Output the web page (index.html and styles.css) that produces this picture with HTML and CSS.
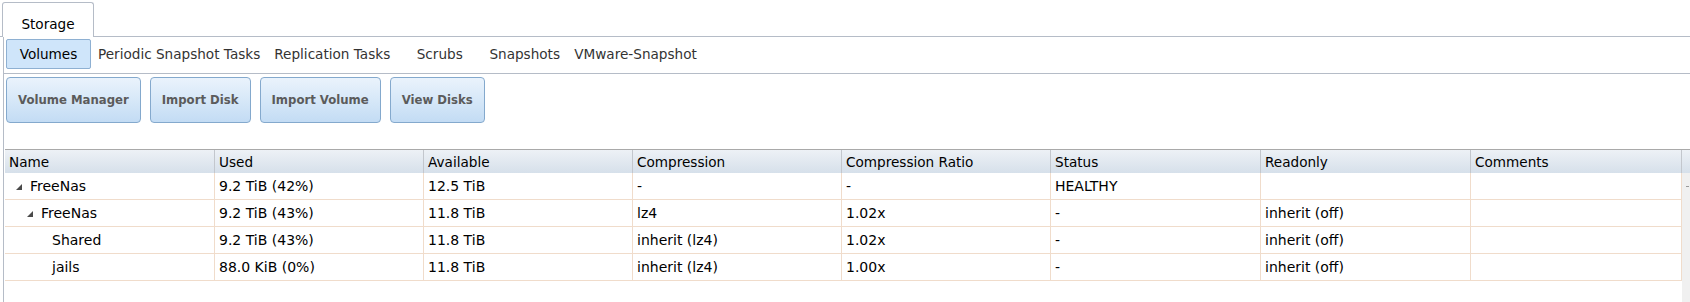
FILE: index.html
```html
<!DOCTYPE html>
<html lang="en">
<head>
    <meta charset="UTF-8">
    <title>Storage</title>
    <link rel="stylesheet" href="styles.css">
</head>
<body>
    <div class="tab-bar">
        <div class="tab active">Storage</div>
    </div>

    <div class="panel">
        <div class="sub-tabs">
            <div class="sub-tab selected">Volumes</div>
            <div class="sub-tab">Periodic Snapshot Tasks</div>
            <div class="sub-tab">Replication Tasks</div>
            <div class="sub-tab">Scrubs</div>
            <div class="sub-tab">Snapshots</div>
            <div class="sub-tab">VMware-Snapshot</div>
        </div>

        <div class="toolbar">
            <button class="action">Volume Manager</button>
            <button class="action">Import Disk</button>
            <button class="action">Import Volume</button>
            <button class="action">View Disks</button>
        </div>

        <div class="grid">
            <div class="grid-head">
                <div class="hcell">Name</div>
                <div class="hcell">Used</div>
                <div class="hcell">Available</div>
                <div class="hcell">Compression</div>
                <div class="hcell">Compression Ratio</div>
                <div class="hcell">Status</div>
                <div class="hcell">Readonly</div>
                <div class="hcell">Comments</div>
                <div class="hfill"></div>
            </div>
            <div class="grid-body">
                <div class="rows">
                    <div class="row">
                        <div class="cell"><span class="expander"><span class="tri"></span></span>FreeNas</div>
                        <div class="cell">9.2 TiB (42%)</div>
                        <div class="cell">12.5 TiB</div>
                        <div class="cell">-</div>
                        <div class="cell">-</div>
                        <div class="cell">HEALTHY</div>
                        <div class="cell"></div>
                        <div class="cell"></div>
                    </div>
                    <div class="row">
                        <div class="cell"><span class="indent"></span><span class="expander"><span class="tri"></span></span>FreeNas</div>
                        <div class="cell">9.2 TiB (43%)</div>
                        <div class="cell">11.8 TiB</div>
                        <div class="cell">lz4</div>
                        <div class="cell">1.02x</div>
                        <div class="cell">-</div>
                        <div class="cell">inherit (off)</div>
                        <div class="cell"></div>
                    </div>
                    <div class="row">
                        <div class="cell"><span class="indent"></span><span class="indent"></span><span class="expander"></span>Shared</div>
                        <div class="cell">9.2 TiB (43%)</div>
                        <div class="cell">11.8 TiB</div>
                        <div class="cell">inherit (lz4)</div>
                        <div class="cell">1.02x</div>
                        <div class="cell">-</div>
                        <div class="cell">inherit (off)</div>
                        <div class="cell"></div>
                    </div>
                    <div class="row">
                        <div class="cell"><span class="indent"></span><span class="indent"></span><span class="expander"></span>jails</div>
                        <div class="cell">88.0 KiB (0%)</div>
                        <div class="cell">11.8 TiB</div>
                        <div class="cell">inherit (lz4)</div>
                        <div class="cell">1.00x</div>
                        <div class="cell">-</div>
                        <div class="cell">inherit (off)</div>
                        <div class="cell"></div>
                    </div>
                </div>
                <div class="scroller"><span class="scroll-mark"></span></div>
            </div>
        </div>
    </div>
</body>
</html>
```

FILE: styles.css
```css
body {
    margin: 0;
    height: 302px;
    overflow: hidden;
    display: flex;
    flex-direction: column;
    font-family: "DejaVu Sans", Verdana, sans-serif;
    font-size: 13.6px;
    color: #000;
    background: #fff;
}

.tab-bar {
    display: flex;
    align-items: flex-end;
    height: 36px;
    padding-left: 2px;
    border-bottom: 1px solid #b5bcc7;
    box-sizing: content-box;
}

.tab {
    width: 92px;
    height: 35px;
    margin-bottom: -1px;
    padding-top: 13px;
    line-height: 17px;
    box-sizing: border-box;
    text-align: center;
    background: #fff;
    border: 1px solid #b5bcc7;
    border-bottom: none;
    border-radius: 3px 3px 0 0;
}

.panel {
    flex: 1;
    display: flex;
    flex-direction: column;
    margin-left: 3px;
    border-left: 1px solid #b5bcc7;
}

.sub-tabs {
    display: flex;
    height: 37px;
    padding: 2px 0 0 2px;
    box-sizing: border-box;
    border-bottom: 1px solid #b5bcc7;
}

.sub-tab {
    min-width: 85px;
    height: 30px;
    padding: 0 6px;
    line-height: 28px;
    box-sizing: border-box;
    text-align: center;
    color: #333;
    border: 1px solid transparent;
    border-radius: 2px;
}

.sub-tab.selected {
    background: #cfe5fa;
    border-color: #8eb0d2;
    color: #000;
}

.toolbar {
    display: flex;
    gap: 9px;
    padding: 3px 0 26px 2px;
}

.action {
    height: 46px;
    padding: 0 11px;
    font-family: "DejaVu Sans", Verdana, sans-serif;
    font-size: 11.7px;
    font-weight: bold;
    color: #5b5b5b;
    background: linear-gradient(#eaf3fc, #c3dcf4);
    border: 1px solid #84a9cd;
    border-radius: 4px;
}

.grid {
    flex: 1;
    display: flex;
    flex-direction: column;
    margin-left: 1px;
    border-top: 1px solid #a9a9a9;
}

.grid-head {
    display: grid;
    grid-template-columns: 210px 209px 209px 209px 209px 210px 210px 211px 1fr;
    height: 23px;
    background: linear-gradient(#edf1f6, #d6e0ea);
}

.hcell {
    padding: 1px 0 0 4px;
    line-height: 22px;
    border-right: 1px solid #c3c7cd;
    white-space: nowrap;
    overflow: hidden;
}

.grid-body {
    flex: 1;
    display: flex;
}

.rows {
    width: 1677px;
}

.row {
    display: grid;
    grid-template-columns: 210px 209px 209px 209px 209px 210px 210px 211px;
    height: 27px;
    border-bottom: 1px solid #f0dccb;
    box-sizing: border-box;
    font-size: 14px;
}

.cell {
    display: flex;
    align-items: center;
    padding-left: 4px;
    border-right: 1px solid #f0dccb;
    white-space: nowrap;
    overflow: hidden;
}

.indent {
    width: 11px;
    flex: none;
}

.expander {
    display: flex;
    width: 21px;
    flex: none;
}

.tri {
    width: 0;
    height: 0;
    margin: 1px 0 0 7px;
    border-style: solid;
    border-width: 0 0 6px 6px;
    border-color: transparent transparent #4a4a4a transparent;
}

.scroller {
    flex: 1;
    position: relative;
    background: #f0f0f0;
}

.scroll-mark {
    position: absolute;
    top: 13px;
    right: 1px;
    width: 3px;
    height: 1px;
    background: #9a9a9a;
}
```
